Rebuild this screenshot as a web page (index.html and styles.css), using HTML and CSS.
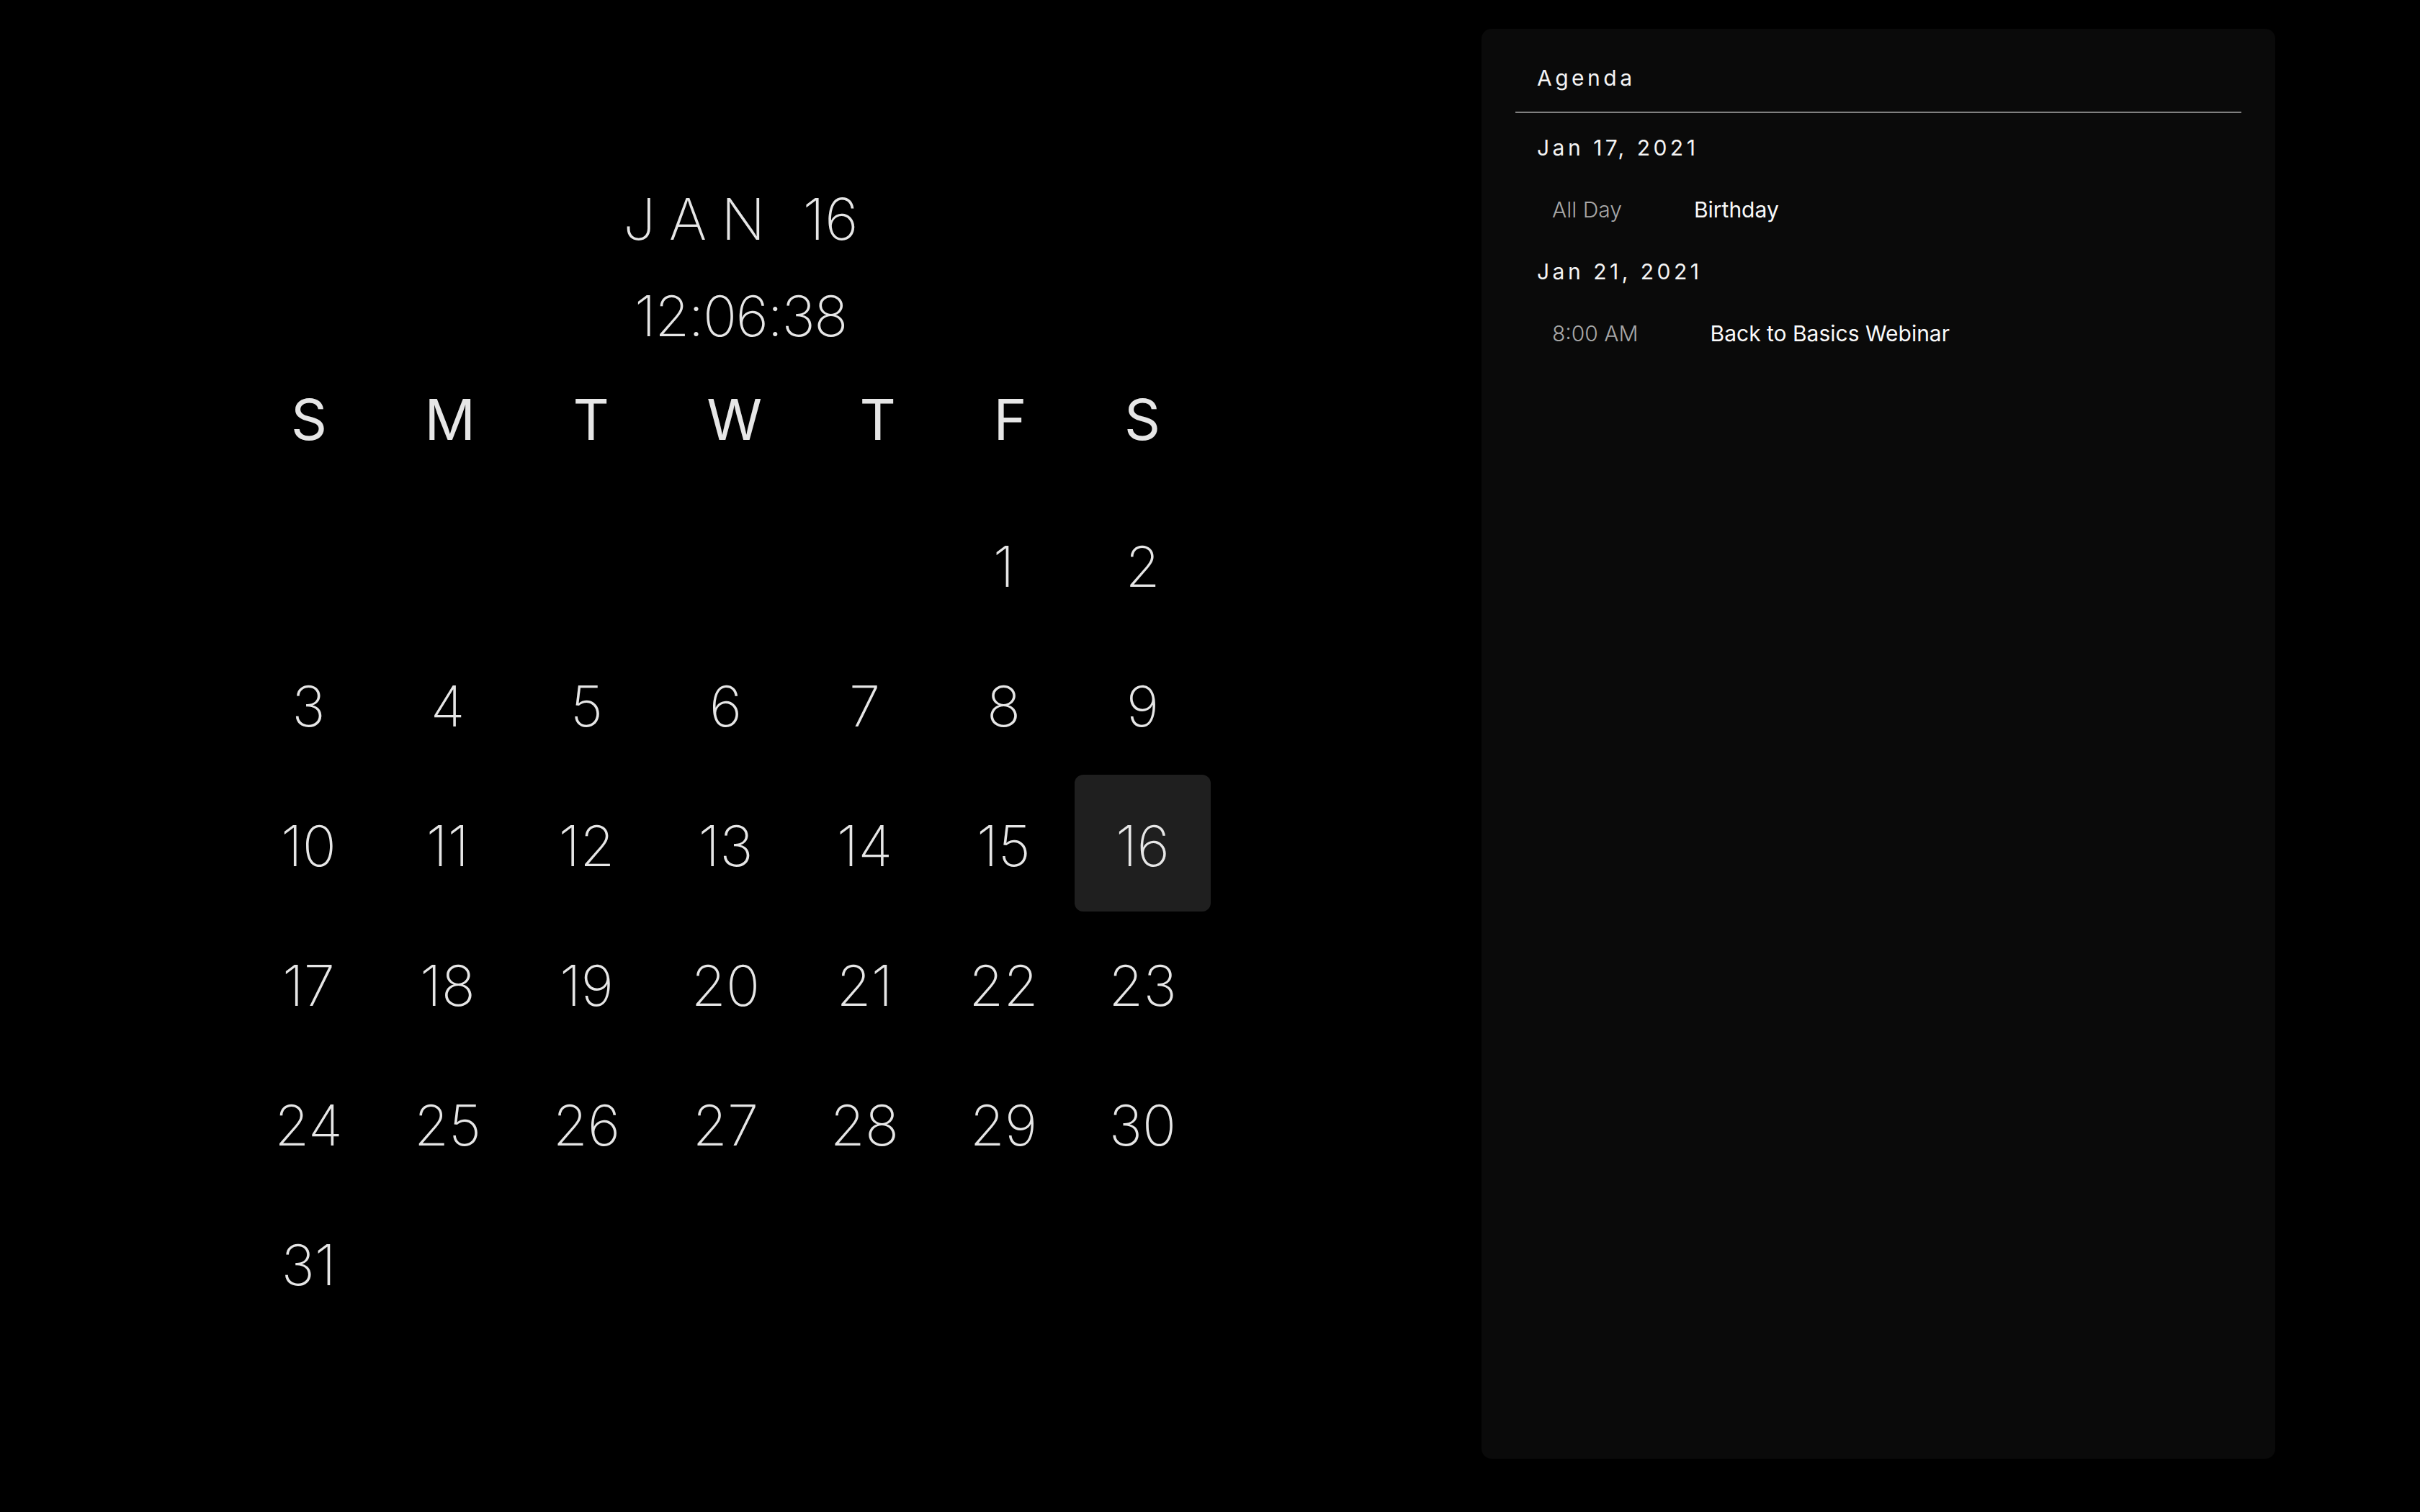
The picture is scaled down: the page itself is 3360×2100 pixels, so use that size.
FILE: index.html
```html
<!DOCTYPE html>
<html lang="en">
<head>
<meta charset="utf-8">
<title>Calendar</title>
<link rel="stylesheet" href="styles.css">
</head>
<body>
<main class="app">
  <section class="clock-cal">
    <div class="date-line"><span class="month">JAN</span><span class="day">16</span></div>
    <div class="time">12:06:38</div>
    <div class="calendar">
      <div class="weekdays">
        <span>S</span><span>M</span><span>T</span><span>W</span><span>T</span><span>F</span><span>S</span>
      </div>
      <div class="days">
        <span class="cell"></span><span class="cell"></span><span class="cell"></span><span class="cell"></span><span class="cell"></span>
        <span class="cell">1</span><span class="cell">2</span>
        <span class="cell">3</span><span class="cell">4</span><span class="cell">5</span><span class="cell">6</span><span class="cell">7</span><span class="cell">8</span><span class="cell">9</span>
        <span class="cell">10</span><span class="cell">11</span><span class="cell">12</span><span class="cell">13</span><span class="cell">14</span><span class="cell">15</span><span class="cell today">16</span>
        <span class="cell">17</span><span class="cell">18</span><span class="cell">19</span><span class="cell">20</span><span class="cell">21</span><span class="cell">22</span><span class="cell">23</span>
        <span class="cell">24</span><span class="cell">25</span><span class="cell">26</span><span class="cell">27</span><span class="cell">28</span><span class="cell">29</span><span class="cell">30</span>
        <span class="cell">31</span>
      </div>
    </div>
  </section>
  <aside class="agenda">
    <div class="agenda-title">Agenda</div>
    <div class="agenda-list">
      <div class="agenda-date">Jan 17, 2021</div>
      <div class="event"><span class="ev-time">All Day</span><span class="ev-title">Birthday</span></div>
      <div class="agenda-date">Jan 21, 2021</div>
      <div class="event"><span class="ev-time">8:00 AM</span><span class="ev-title">Back to Basics Webinar</span></div>
    </div>
  </aside>
</main>
</body>
</html>
```
FILE: styles.css
```css
html, body {
  margin: 0;
  padding: 0;
  background: #000;
}

body {
  font-family: Inter, "Noto Sans", "Liberation Sans", sans-serif;
  color: #e6e6e6;
}

.app {
  display: flex;
  height: 2100px;
}

/* ---------- Left: clock + month grid ---------- */
.clock-cal {
  flex: 1;
  display: flex;
  flex-direction: column;
  padding-top: 264px;
}

.date-line {
  height: 80px;
  font-size: 80px;
  line-height: 80px;
  font-weight: 150;
  text-align: center;
  white-space: nowrap;
}

.month {
  font-weight: 200;
  letter-spacing: 20px;
  margin-right: 32px;
}

.time {
  margin-top: 56px;
  height: 78px;
  font-size: 78px;
  line-height: 78px;
  font-weight: 150;
  letter-spacing: -1.5px;
  text-align: center;
}

.calendar {
  margin-left: 332px;
  width: 1351px;
}

.weekdays {
  margin-top: 15px;
  padding: 0 72px 0 72px;
  display: flex;
  justify-content: space-between;
  height: 180px;
  font-size: 78px;
  line-height: 180px;
  font-weight: 400;
}

.days {
  margin-top: 13px;
  display: grid;
  grid-template-columns: repeat(7, 193px);
  grid-auto-rows: 194px;
  font-size: 78px;
  font-weight: 150;
}

.cell {
  display: flex;
  align-items: center;
  justify-content: center;
  margin: 2px;
  padding-top: 6px;
  border-radius: 12px;
}

.cell.today {
  background: #1f1f1f;
}

/* ---------- Right: agenda panel ---------- */
.agenda {
  width: 1102px;
  margin: 40px 201px 74px 0;
  padding: 0 47px;
  box-sizing: border-box;
  background: #0a0a0a;
  border-radius: 14px;
  font-size: 30px;
  line-height: 36px;
}

.agenda-title {
  padding: 50px 0 29px 30px;
  border-bottom: 2px solid #808080;
  letter-spacing: 4.5px;
  color: #f4f4f4;
}

.agenda-list {
  display: flex;
  flex-direction: column;
  gap: 50px;
  padding-top: 30px;
}

.agenda-date {
  padding-left: 30px;
  letter-spacing: 4.5px;
  color: #f4f4f4;
}

.event {
  display: flex;
  padding-left: 51px;
}

.ev-time {
  font-weight: 300;
  color: #a8a8a8;
  margin-right: 100px;
}

.ev-title {
  color: #fafafa;
}
```
